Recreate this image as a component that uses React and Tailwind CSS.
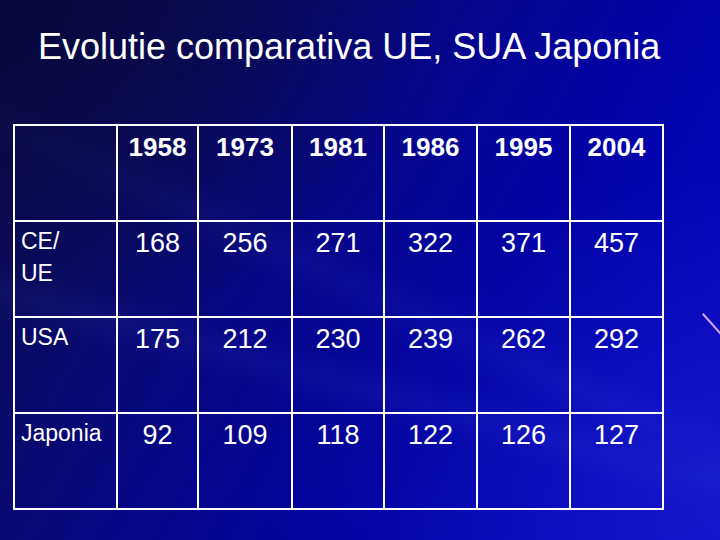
const years = ["1958", "1973", "1981", "1986", "1995", "2004"];

const rows = [
  { label: ["CE/", "UE"], values: [168, 256, 271, 322, 371, 457] },
  { label: ["USA"], values: [175, 212, 230, 239, 262, 292] },
  { label: ["Japonia"], values: [92, 109, 118, 122, 126, 127] },
];

const font = "font-['Liberation_Sans',Arial,sans-serif]";

export default function App() {
  return (
    <div
      className={`relative w-[720px] h-[540px] overflow-hidden text-white ${font} bg-[radial-gradient(ellipse_at_0%_0%,rgba(8,8,60,0.9)_0%,rgba(8,8,60,0)_45%),radial-gradient(ellipse_at_100%_90%,rgba(120,140,255,0.1)_0%,rgba(120,140,255,0)_45%),linear-gradient(195deg,rgba(120,140,255,0)_62%,rgba(120,140,255,0.06)_66%,rgba(120,140,255,0)_70%),linear-gradient(205deg,rgba(120,140,255,0)_48%,rgba(120,140,255,0.05)_52%,rgba(120,140,255,0)_56%),linear-gradient(120deg,#0b0b4c_0%,#0a0a66_22%,#06068c_45%,#0202a4_65%,#0606bc_85%,#0a0ac6_100%)]`}
    >
      {/* thin pink accent line at the right edge */}
      <div className="absolute left-[698px] top-[324px] w-[30px] h-[1.5px] rotate-[48deg] bg-[#d9a0f0]" />

      <div className="relative">
        <div className="h-[124px] pt-[20px] pl-[38px]">
          <h1 className="text-[36px] leading-normal font-normal">
            Evolutie comparativa UE, SUA Japonia
          </h1>
        </div>

        <div className="ml-[13px] w-fit border-l-2 border-t-2 border-white grid grid-cols-[103px_81px_94px_92px_93px_93px_93px] grid-rows-[96px_96px_96px_96px]">
          <div className="border-r-2 border-b-2 border-white" />
          {years.map((y) => (
            <div
              key={y}
              className="border-r-2 border-b-2 border-white text-center text-[26px] font-bold leading-normal pt-[2px]"
            >
              {y}
            </div>
          ))}

          {rows.map((r) => (
            <div key={r.label.join("")} className="contents">
              <div className="border-r-2 border-b-2 border-white text-[23px] leading-[32px] pt-[3px] pl-[6px]">
                {r.label.map((l) => (
                  <div key={l}>{l}</div>
                ))}
              </div>
              {r.values.map((v, i) => (
                <div
                  key={i}
                  className="border-r-2 border-b-2 border-white text-center text-[27px] leading-normal pt-[1px]"
                >
                  {v}
                </div>
              ))}
            </div>
          ))}
        </div>
      </div>
    </div>
  );
}
